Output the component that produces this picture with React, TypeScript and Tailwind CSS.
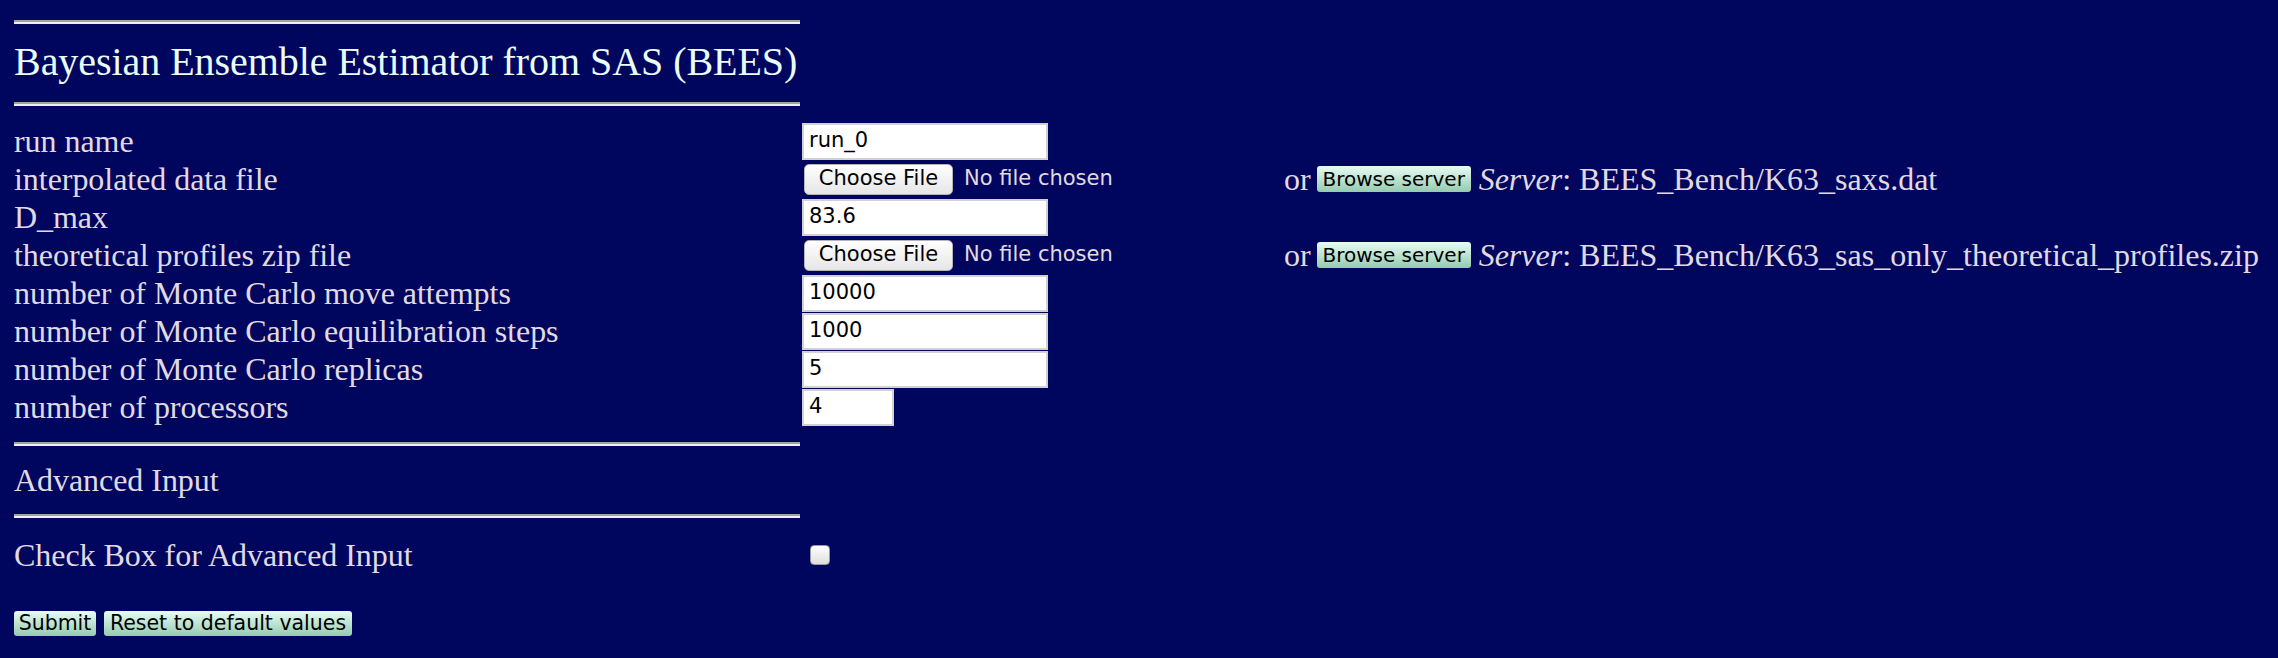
import React from "react"

const serif = { fontFamily: '"Liberation Serif", "Times New Roman", serif' }
const sans = { fontFamily: '"DejaVu Sans", Verdana, sans-serif' }

function Rule() {
  return <div className="h-[4px] w-[786px] border-t-2 border-b-2 border-t-[#a3a3a3] border-b-[#efefef]" />
}

function TextBox({ value, wide = true }: { value: string; wide?: boolean }) {
  return (
    <div
      className={`flex h-[37px] items-center border-2 border-[#d2d2d2] bg-white pl-[5px] text-[21px] text-black ${wide ? "w-[246px]" : "w-[92px]"}`}
      style={sans}
    >
      {value}
    </div>
  )
}

function FilePicker() {
  return (
    <div className="flex items-center gap-[11px] whitespace-nowrap" style={sans}>
      <div className="ml-[2px] flex h-[31px] w-[149px] items-center justify-center rounded-[5px] border border-[#b5b5b5] bg-gradient-to-b from-white to-[#e6e6e6] text-[21px] text-black">
        Choose File
      </div>
      <span className="text-[21px] text-[#e2dae2]">No file chosen</span>
    </div>
  )
}

function GreenButton({ children, w }: { children: React.ReactNode; w: string }) {
  return (
    <div
      className={`flex items-center justify-center whitespace-nowrap rounded-[3px] bg-gradient-to-b from-[#e8fcf5] to-[#94cbb0] text-black ${w}`}
      style={sans}
    >
      {children}
    </div>
  )
}

function ServerNote({ path }: { path: string }) {
  return (
    <div className="flex items-center whitespace-nowrap text-[32px] text-[#e2dae2]" style={serif}>
      <span>or</span>
      <GreenButton w="ml-[6px] h-[26px] w-[154px] text-[20px]">Browse server</GreenButton>
      <span className="ml-[8px] italic">Server</span>
      <span>: {path}</span>
    </div>
  )
}

const rows: { label: string; field: React.ReactNode; extra?: React.ReactNode }[] = [
  { label: "run name", field: <TextBox value="run_0" /> },
  { label: "interpolated data file", field: <FilePicker />, extra: <ServerNote path="BEES_Bench/K63_saxs.dat" /> },
  { label: "D_max", field: <TextBox value="83.6" /> },
  {
    label: "theoretical profiles zip file",
    field: <FilePicker />,
    extra: <ServerNote path="BEES_Bench/K63_sas_only_theoretical_profiles.zip" />,
  },
  { label: "number of Monte Carlo move attempts", field: <TextBox value="10000" /> },
  { label: "number of Monte Carlo equilibration steps", field: <TextBox value="1000" /> },
  { label: "number of Monte Carlo replicas", field: <TextBox value="5" /> },
  { label: "number of processors", field: <TextBox value="4" wide={false} /> },
]

export default function App() {
  return (
    <div className="min-h-screen bg-[#00065e] pl-[14px] pt-[20px]">
      <Rule />

      {/* Title */}
      <h2
        className="mt-[14px] mb-[16px] h-[48px] whitespace-nowrap text-[40px] leading-[48px] tracking-[-0.05px] text-[#eafcfc]"
        style={serif}
      >
        Bayesian Ensemble Estimator from SAS (BEES)
      </h2>
      <Rule />

      {/* Main inputs */}
      <div className="mt-[16px] grid grid-cols-[788px_482px_auto]">
        {rows.map((r) => (
          <React.Fragment key={r.label}>
            <div className="flex h-[38px] items-center whitespace-nowrap text-[32px] tracking-[-0.05px] text-[#e2dae2]" style={serif}>
              {r.label}
            </div>
            <div className="flex h-[38px] items-center">{r.field}</div>
            <div className="flex h-[38px] items-center">{r.extra}</div>
          </React.Fragment>
        ))}
      </div>

      <div className="mt-[16px]">
        <Rule />
      </div>
      <div className="flex h-[68px] items-center text-[32px] tracking-[-0.05px] text-[#e2dae2]" style={serif}>
        Advanced Input
      </div>
      <Rule />

      {/* Advanced toggle */}
      <div className="mt-[18px] flex h-[38px] items-center">
        <div className="w-[796px] text-[32px] tracking-[-0.05px] text-[#e2dae2]" style={serif}>
          Check Box for Advanced Input
        </div>
        <div className="h-[20px] w-[20px] rounded-[4px] border border-[#9a9a9a] bg-gradient-to-b from-white to-[#dedede]" />
      </div>

      {/* Actions */}
      <div className="mt-[37px] flex gap-[8px]">
        <GreenButton w="h-[25px] w-[82px] text-[20.5px]">Submit</GreenButton>
        <GreenButton w="h-[25px] w-[248px] text-[20.5px]">Reset to default values</GreenButton>
      </div>
    </div>
  )
}
